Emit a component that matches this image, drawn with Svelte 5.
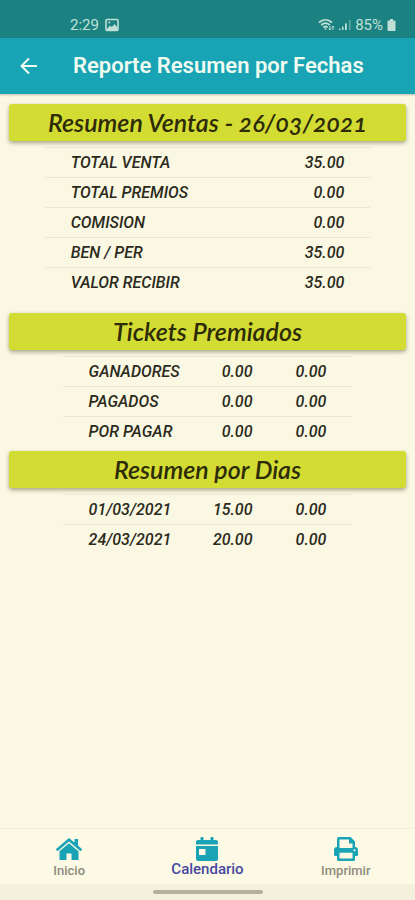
<script>
  const ventas = [
    ['TOTAL VENTA', '35.00'],
    ['TOTAL PREMIOS', '0.00'],
    ['COMISION', '0.00'],
    ['BEN / PER', '35.00'],
    ['VALOR RECIBIR', '35.00'],
  ];

  const tickets = [
    ['GANADORES', '0.00', '0.00'],
    ['PAGADOS', '0.00', '0.00'],
    ['POR PAGAR', '0.00', '0.00'],
  ];

  const dias = [
    ['01/03/2021', '15.00', '0.00'],
    ['24/03/2021', '20.00', '0.00'],
  ];

  let active = $state('calendario');
</script>

{#snippet tabla(rows, kind)}
  <table class={kind}>
    <tbody>
      {#each rows as [label, ...values]}
        <tr>
          <th scope="row">{label}</th>
          {#each values as value}
            <td>{value}</td>
          {/each}
        </tr>
      {/each}
    </tbody>
  </table>
{/snippet}

<div class="screen">
  <div class="status-bar">
    <span>2:29</span>
    <svg width="14" height="14" viewBox="0 0 14 14" fill="none"><rect x="1" y="1.5" width="12" height="11" rx="1" stroke="currentColor" stroke-width="1.6"/><path d="M2 11l3-3.500 2 1.500 2.500-3 3 3.500V12H2z" fill="currentColor"/><circle cx="4.300" cy="4.600" r="1" fill="currentColor"/></svg>
    <span class="spacer"></span>
    <svg width="17" height="14" viewBox="0 0 17 14" fill="none" stroke="currentColor" stroke-width="1.800"><path d="M1 4.500c4-3.600 9-3.600 13 0M3.200 7c2.800-2.500 5.800-2.500 8.600 0M5.400 9.400c1.400-1.200 2.800-1.200 4.200 0"/><path d="M6 10.500h3L7.500 12z" fill="currentColor" stroke="none"/><path d="M12 8v4M10.800 10.600L12 12l1.200-1.400M15 12V8M13.900 9.300L15 8l1.200 1.300" stroke-width="1"/></svg>
    <svg width="12" height="14" viewBox="0 0 12 14" fill="currentColor"><path d="M0 10.500h1.500V12H0zM3 8.500h1.500V12H3zM6 5.500h1.800V12H6z"/><path d="M10 2h1.500v10H10z" opacity=".45"/></svg>
    <span>85%</span>
    <svg width="9" height="14" viewBox="0 0 9 14" fill="currentColor"><path d="M3 1h3v1.500h1.500a1 1 0 0 1 1 1V12a1 1 0 0 1-1 1h-6a1 1 0 0 1-1-1V3.500a1 1 0 0 1 1-1H3z"/></svg>
  </div>

  <header>
    <button type="button" aria-label="Volver">
      <svg width="18" height="18" viewBox="0 0 18 18" fill="none" stroke="currentColor" stroke-width="2"><path d="M17 9H2M9 1.500L1.500 9 9 16.500"/></svg>
    </button>
    <h1>Reporte Resumen por Fechas</h1>
  </header>

  <main>
    <section class="ventas">
      <h2>Resumen Ventas - 26/03/2021</h2>
      {@render tabla(ventas, 'two')}
    </section>
    <section>
      <h2>Tickets Premiados</h2>
      {@render tabla(tickets, 'three')}
    </section>
    <section>
      <h2>Resumen por Dias</h2>
      {@render tabla(dias, 'three')}
    </section>
  </main>

  <nav>
    <button type="button" class:active={active === 'inicio'} onclick={() => (active = 'inicio')}>
      <svg width="28" height="24" viewBox="0 0 28 24" fill="#1aa3b5"><path d="M14 1L.8 12.200l1.700 2L14 4.500l11.500 9.700 1.700-2-4.200-3.600V2h-3.500v3.600z"/><path d="M14 6.200L4.500 14.200V23h7v-6.500h5V23h7v-8.800z"/></svg>
      <span>Inicio</span>
    </button>
    <button type="button" class:active={active === 'calendario'} onclick={() => (active = 'calendario')}>
      <svg width="22" height="24" viewBox="0 0 22 24" fill="#1aa3b5"><path d="M0 7.500V5a2 2 0 0 1 2-2h2.500V.8a.8.800 0 0 1 .8-.8h1.400a.8.800 0 0 1 .8.800V3h7V.8a.8.800 0 0 1 .8-.8h1.400a.8.800 0 0 1 .8.800V3H20a2 2 0 0 1 2 2v2.500z"/><path fill-rule="evenodd" d="M0 9h22v13a2 2 0 0 1-2 2H2a2 2 0 0 1-2-2zM3 12v6h6.500v-6z"/></svg>
      <span>Calendario</span>
    </button>
    <button type="button" class:active={active === 'imprimir'} onclick={() => (active = 'imprimir')}>
      <svg width="24" height="24" viewBox="0 0 24 24" fill="#1aa3b5"><path fill-rule="evenodd" d="M3 10V2a2 2 0 0 1 2-2h11.500L21 4.500V10a3 3 0 0 1 3 3v5a1 1 0 0 1-1 1h-2v3.500a1.500 1.500 0 0 1-1.500 1.500h-15A1.500 1.500 0 0 1 3 22.500V19H1a1 1 0 0 1-1-1v-5a3 3 0 0 1 3-3zM5.500 2.500V11h13V6.500h-3.500v-4zM5.500 15.800V21.500h13v-5.700zM20.500 12.200a1 1 0 1 0 0 2a1 1 0 1 0 0-2z"/></svg>
      <span>Imprimir</span>
    </button>
  </nav>

  <div class="gesture-bar"><span></span></div>
</div>

<style>
  :global(body) {
    margin: 0;
    background: #faf8e3;
  }

  .screen {
    display: flex;
    flex-direction: column;
    min-height: 100vh;
    background: #faf8e3;
    color: #2b2a1c;
    font-family: Roboto, sans-serif;
  }

  .status-bar {
    display: flex;
    align-items: center;
    gap: 4px;
    height: 26px;
    padding: 12px 19px 0 70px;
    background: #1b8281;
    color: #c0e0d6;
    font-size: 15px;
    line-height: 26px;
  }

  .status-bar span:first-child {
    margin-right: 2px;
  }

  .spacer {
    flex: 1;
  }

  header {
    display: flex;
    align-items: center;
    height: 56px;
    background: #19a4b6;
    color: #effbf0;
    box-shadow: 0 1px 2px rgba(0, 0, 0, 0.25);
  }

  header button {
    display: flex;
    margin: 0 27px 0 12px;
    padding: 8px;
    border: none;
    background: none;
    color: inherit;
    cursor: pointer;
  }

  h1 {
    margin: 0;
    font-size: 22px;
    font-weight: 600;
    line-height: 28px;
    white-space: nowrap;
  }

  main {
    flex: 1;
    padding: 10px 9px;
  }

  section {
    margin-bottom: 5px;
  }

  .ventas {
    margin-bottom: 16px;
  }

  h2 {
    margin: 0 0 6px;
    border-radius: 3px;
    background: #d2dc32;
    box-shadow: 0 2px 4px rgba(60, 60, 20, 0.45);
    color: #2d2b08;
    font-family: Lato, sans-serif;
    font-size: 25px;
    font-style: italic;
    font-weight: 600;
    font-feature-settings: "onum";
    line-height: 37px;
    text-align: center;
    white-space: nowrap;
  }

  table {
    margin: 0 auto;
    border-spacing: 0;
    table-layout: fixed;
    font-size: 16px;
    font-style: italic;
    line-height: 29px;
  }

  .two {
    width: 82%;
  }

  .three {
    width: 73%;
  }

  th,
  td {
    box-sizing: border-box;
    padding: 0;
    border-top: 1px solid #e9e7d3;
    font-weight: 500;
  }

  th {
    padding-left: 26px;
    text-align: left;
  }

  td {
    padding-right: 26px;
    text-align: right;
  }

  .three th {
    width: 49%;
  }

  nav {
    display: grid;
    grid-template-columns: repeat(3, 1fr);
    height: 55px;
    border-top: 1px solid #f1efda;
    background: #fcf9e5;
  }

  nav button {
    display: flex;
    flex-direction: column;
    align-items: center;
    gap: 2px;
    padding: 8px 0 0;
    border: none;
    background: none;
    color: #8d8b7d;
    font-family: inherit;
    font-size: 13px;
    font-weight: 500;
    line-height: 16px;
    cursor: pointer;
  }

  nav button.active {
    gap: 0;
    color: #4648a0;
    font-size: 15px;
  }

  .gesture-bar {
    display: flex;
    align-items: center;
    justify-content: center;
    height: 16px;
    background: #f3f1dc;
  }

  .gesture-bar span {
    width: 110px;
    height: 4px;
    border-radius: 2px;
    background: #b3b09d;
  }
</style>
